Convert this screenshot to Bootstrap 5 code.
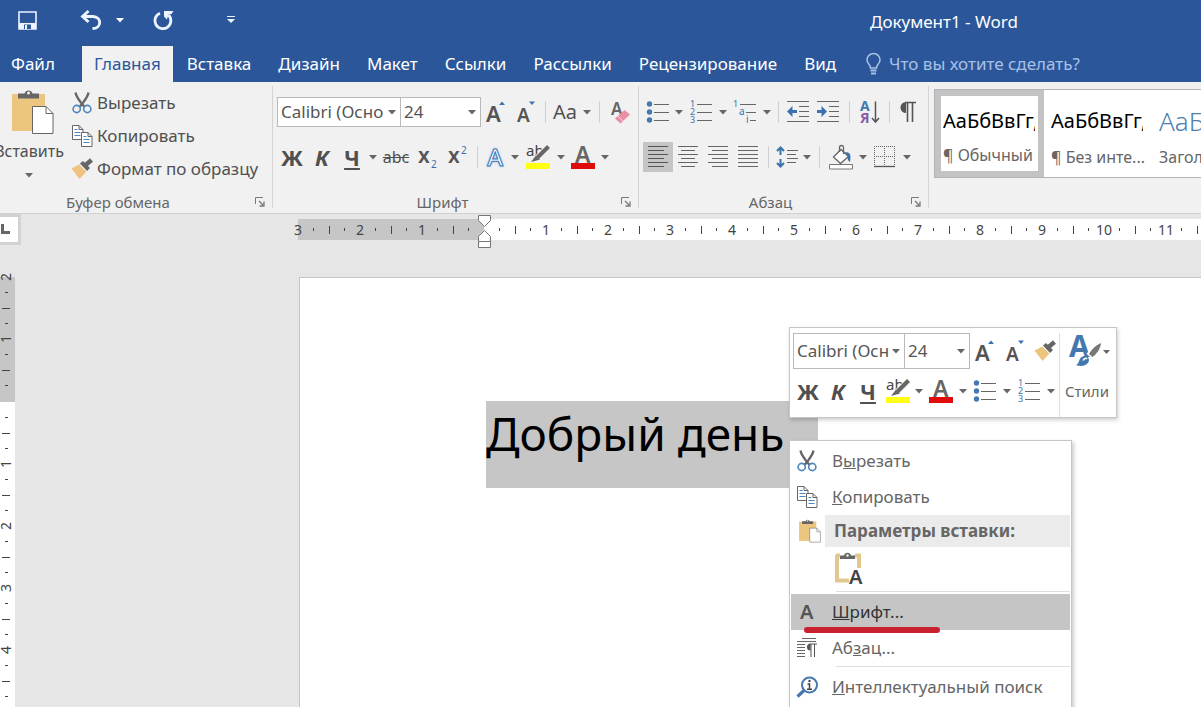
<!DOCTYPE html>
<html lang="ru">
<head>
<meta charset="utf-8">
<meta name="viewport" content="width=device-width, initial-scale=1">
<title>Документ1 - Word</title>
<link href="https://cdn.jsdelivr.net/npm/bootstrap@5.3.0/dist/css/bootstrap.min.css" rel="stylesheet">
<style>
  :root { --word-blue:#2b579a; --ink:#444; --line:#c8c8c8; --ribbon:#f1f1f1; --grey:#c6c6c6; --icon:#666; --accent:#4478ae; }
  body { font-family:"Noto Sans","Open Sans",sans-serif; font-size:16px; line-height:20px; color:var(--ink); background:#e6e6e6; }
  svg { display:block; overflow:visible; }
  symbol { overflow:visible; }
  svg text { font-family:"Noto Sans",sans-serif; }
  .app-head { background:var(--word-blue); color:#fff; }
  .title-row { height:46px; }
  .quick-bar { flex:0 0 870px; height:40px; padding-left:17px; display:grid; grid-template-columns:20px 65px 36px 14px 22px 46px 22px; align-items:center; }
  .doc-title { font-size:17px; line-height:24px; padding-top:10px; }
  .tool { display:flex; align-items:center; justify-content:center; padding:0; border:0; border-radius:0; color:#505050; background:transparent; line-height:24px; min-width:0; height:30px; overflow:visible; }
  .tool:hover { background:#d5d5d5; }
  .quick-bar .tool:hover { background:#3e6db5; }
  .tabs { height:36px; font-size:17px; line-height:24px; }
  .tabs a { color:#fff; padding:6px 13px; text-decoration:none; white-space:nowrap; margin-right:1px; }
  .tabs a.file-tab { padding-left:11px; margin-right:14px; }
  .tabs a.current { background:var(--ribbon); color:var(--word-blue); padding:6px 12px; }
  .tabs .tell-me { color:#a9c0e6; margin-left:16px; white-space:nowrap; }
  .ribbon { background:var(--ribbon); height:132px; border-bottom:1px solid #d2d2d2; }
  .ribbon-group { border-right:1px solid #d4d4d4; margin:4px 0 5px; padding:11px 3px 0 4px; flex:none; }
  .group-clip { width:273px; padding:0 3px 0 0; }
  .group-font { width:366px; }
  .group-par { width:290px; }
  .group-name { font-size:15px; line-height:18px; color:#666; text-align:center; margin-top:21px; display:flex; align-items:center; }
  .group-name span { flex:1; padding-right:10px; }
  .group-clip .group-name { margin-top:8px; }
  .group-clip .group-name span { padding:0 16px 0 0; }
  .group-name .tool { width:16px; height:16px; margin-right:1px; }
  .icon-row { display:grid; align-items:center; height:30px; }
  .icon-row + .icon-row { margin-top:15px; }
  .font-top { grid-template-columns:124px 80px 30px 30px 8px 32px 12px 12px 32px; }
  .font-low { grid-template-columns:30px 30px 30px 12px 34px 30px 30px 8px 28px 12px 34px 12px 32px 12px; }
  .par-top { grid-template-columns:30px 12px 32px 12px 32px 12px 10px 30px 30px 12px 30px 8px 30px; }
  .par-low { grid-template-columns:30px 30px 30px 30px 10px 28px 12px 12px 32px 12px 32px 12px; }
  .rule { width:1px; height:22px; background:#d0d0d0; justify-self:center; }
  .combo { height:30px; border:1px solid #b9b9b9; border-radius:0; padding:0 12px 0 3px; font-size:17px; line-height:24px; color:#555; background:#fff url("data:image/svg+xml,%3Csvg xmlns='http://www.w3.org/2000/svg' width='8' height='5'%3E%3Cpath d='M0 0h8L4 4.5z' fill='%23666'/%3E%3C/svg%3E") no-repeat right 4px center; background-size:8px 5px; }
  .combo + .combo { margin-left:-1px; width:81px; }
  .glyph { font-weight:700; font-size:22px; }
  .outlined { font-size:24px; font-weight:500; color:#fff; -webkit-text-stroke:1px #3a78ba; text-shadow:0 0 3px #7db4ea, 0 0 2px #a9cdf0; }
  .caret-svg { color:#666; }
  .tool.pressed { background:#c5c5c5; }
  .paste-col { width:71px; padding-top:3px; }
  .paste-col .tool { flex-direction:column; height:92px; width:82px; margin-left:-12px; justify-content:flex-start; font-size:16px; }
  .paste-col .drop { margin-top:10px; }
  .clip-list .tool { height:33px; justify-content:flex-start; gap:4px; font-size:17px; white-space:nowrap; }
  .clip-list svg { width:22px; }
  .gallery { margin:7px 0 0 5px; height:89px; background:#fff; border:1px solid #b0b4ba; border-right:0; overflow:hidden; min-width:0; flex:1; }
  .style-card { display:flex; flex-direction:column; align-items:flex-start; justify-content:flex-start; flex:none; width:108px; height:87px; border:0; background:#fff; padding:11px 1px 0 7px; text-align:left; white-space:nowrap; color:#666; }
  .style-card.chosen { border:6px solid #c3c3c3; padding:5px 0 0 2px; width:109px; }
  .style-card .sample { display:block; font-size:20px; line-height:40px; color:#000; width:92px; overflow:hidden; }
  .style-card .sample.head-one { font-size:26px; color:#4c7fae; font-weight:300; }
  .style-card .style-name { display:block; font-size:16px; line-height:32px; }
  .ruler-row { height:36px; padding-top:5px; }
  .tab-stop { width:21px; height:31px; margin-top:-5px; border:3px solid #d2d2d2; border-left:0; background:#fff; padding:0; }
  .ruler-x { height:21px; margin-left:277px; font-size:14px; line-height:21px; min-width:0; }
  .ruler-x .before { width:186px; background:var(--grey); flex:none; }
  .ruler-x .after { background:#fff; min-width:0; overflow:hidden; }
  .ticks { display:flex; }
  .ruler-x .ticks { margin-left:-8px; }
  .cm { display:grid; flex:none; grid-template-columns:16px 15px 16px 15px; width:62px; height:21px; place-items:center; }
  .cm i { display:block; width:1px; height:3px; background:#444; }
  .cm i.half { height:8px; }
  .cm b { font-weight:400; }
  .indent-mark { position:absolute; left:478px; top:1px; }
  .ruler-y { width:15px; flex:none; font-size:14px; line-height:15px; margin-top:27px; background:#fff; }
  .ruler-y .before { background:var(--grey); height:125px; }
  .ruler-y .ticks { flex-direction:column; margin-top:-8px; }
  .ruler-y .before, .ruler-y .after { display:flow-root; }
  .ruler-y .cm { grid-template-columns:12px; grid-template-rows:16px 15px 16px 15px; width:12px; height:62px; }
  .ruler-y .cm b { writing-mode:vertical-rl; transform:rotate(180deg); line-height:12px; }
  .ruler-y .cm i { height:1px; width:3px; }
  .ruler-y .cm i.half { width:8px; }
  .sheet { margin:27px 0 0 284px; background:#fff; border:1px solid #c6c6c6; border-right:0; border-bottom:0; position:relative; padding:123px 0 0 186px; min-width:0; }
  .selected-text { background:var(--grey); color:#000; font-size:46px; line-height:64px; height:87px; width:332px; margin:0; white-space:nowrap; }
  .mini-bar { position:absolute; left:489px; top:49px; width:328px; height:91px; background:#fff; border:1px solid #c6c6c6; box-shadow:1px 2px 4px rgba(0,0,0,.2); padding:5px 0 0 3px; }
  .mini-main { width:267px; border-right:1px solid #dedede; }
  .mini-bar .combo { height:36px; }
  .mini-bar .combo + .combo { width:66px; }
  .mini-top { display:grid; grid-template-columns:112px 65px 30px 30px 30px; align-items:center; height:36px; }
  .mini-low { display:grid; grid-template-columns:30px 30px 30px 30px 12px 32px 12px 32px 12px 32px 12px; align-items:center; height:44px; }
  .mini-styles { width:54px; height:80px; flex-direction:column; justify-content:flex-start; font-size:15px; color:#666; gap:12px; }
  .context { position:absolute; left:489px; top:162px; width:283px; height:280px; background:#fff; border:1px solid #c6c6c6; box-shadow:2px 2px 4px rgba(0,0,0,.2); padding:2px 1px; font-size:17px; }
  .context .entry { display:flex; align-items:center; height:36px; padding:0 0 0 5px; color:#666; white-space:nowrap; gap:14px; line-height:24px; }
  .context .entry svg { width:22px; flex:none; }
  .context .entry.hot { background:#c5c5c5; color:#333; position:relative; }
  .context .caption { height:32px; display:flex; font-weight:700; color:#666; }
  .context .caption span { background:#ebebeb; flex:1; padding:4px 0 0 9px; line-height:24px; }
  .context .caption svg { margin:4px 4px 0 8px; width:22px; }
  .context .text-only { height:36px; margin:4px 0 4px 44px; }
  .context .divide { height:1px; background:#dedede; margin:0 0 2px 45px; }
  .red-mark { position:absolute; left:13px; top:33px; width:136px; height:6px; border-radius:3px; background:#cb2030; z-index:2; }
</style>
</head>
<body class="vh-100 d-flex flex-column overflow-hidden">

<svg class="d-none" aria-hidden="true">
  <symbol id="caret" viewBox="0 0 8 5"><path d="M0 0h8L4 4.5z" fill="currentColor"/></symbol>
  <symbol id="launch" viewBox="0 0 10 10"><path d="M.5 7V.5H8" fill="none" stroke="#777"/><path d="M4 4l4 4M9 4.500V9H4.500" fill="none" stroke="#777" stroke-width="1.300"/></symbol>
  <symbol id="cut" viewBox="0 0 22 22">
    <path d="M4.500 0.500C5 4 8 8 9.500 10L13.500 15M17.500 0.500C17 4 14 8 12.500 10L8.500 15" fill="none" stroke="#666" stroke-width="2.300"/>
    <circle cx="5.700" cy="17" r="3.600" fill="none" stroke="#4f86bd" stroke-width="1.600"/><circle cx="16.300" cy="17" r="3.600" fill="none" stroke="#4f86bd" stroke-width="1.600"/>
  </symbol>
  <symbol id="copy" viewBox="0 0 22 22">
    <path d="M1.500 .5H8l4 4V14.500H1.500zM8 .5V4.500H12" fill="#fff" stroke="#666"/><path d="M3.500 4.500h3M3.500 7.500h6M3.500 10.500h6" stroke="#4f86bd"/>
    <path d="M10.500 7.500H17l4 4V21.500H10.500zM17 7.500v4h4" fill="#fff" stroke="#666"/><path d="M12.500 11.500h3M12.500 14.500h6M12.500 17.500h6" stroke="#4f86bd"/>
  </symbol>
  <symbol id="brush" viewBox="0 0 22 22">
    <path d="M.5 10.500L8.500 6.500 15.500 13.500 8.500 21z" fill="#edc37d"/><path d="M9 5.500l3-2.500 7 7-3 3z" fill="#666"/><path d="M14 7.500L20.500 2" stroke="#666" stroke-width="4.500"/><path d="M9.500 7.500l6 6" stroke="#fff" stroke-width=".8"/>
  </symbol>
  <symbol id="paste" viewBox="0 0 42 46">
    <path d="M0 5h33v37H0z" fill="#ecc67e"/><path d="M6 9.500V4.500h6.500A4.200 4.200 0 0 1 20.500 4.500H27v5z" fill="#666"/><circle cx="16.500" cy="4" r="1.500" fill="#f1f1f1"/>
    <path d="M20.500 17.500H34l7 7V44.500H20.500z" fill="#fff" stroke="#666"/><path d="M34 17.500v7h7" fill="none" stroke="#666"/>
  </symbol>
  <symbol id="font-up" viewBox="0 0 24 24"><text x="2" y="22" font-size="22" font-weight="600" fill="#555">A</text><path d="M15 5l3-3.500L21 5z" fill="#3a72ae"/></symbol>
  <symbol id="font-down" viewBox="0 0 24 24"><text x="3" y="22" font-size="19" font-weight="600" fill="#555">A</text><path d="M15 1.500h6L18 5z" fill="#3a72ae"/></symbol>
  <symbol id="marker" viewBox="0 0 26 28">
    <text x="1" y="13" font-size="15" fill="#444">ab</text><path d="M24 3.500L12.500 14.500" stroke="#f1f1f1" stroke-width="6"/><path d="M23.500 3.500L12.500 14.500" stroke="#666" stroke-width="4"/><path d="M11 12.500l4 4L6 19z" fill="#666"/><path d="M1 20h24v6H1z" fill="#ff1"/>
  </symbol>
  <symbol id="color-a" viewBox="0 0 26 28"><text x="5" y="20" font-size="23" font-weight="600" fill="#666">A</text><path d="M1 20h24v6H1z" fill="#e10b0b"/></symbol>
  <symbol id="bullets" viewBox="0 0 24 22">
    <g fill="#4478ae"><circle cx="3.500" cy="3" r="2.700"/><circle cx="3.500" cy="11" r="2.700"/><circle cx="3.500" cy="19" r="2.700"/></g><path d="M8 3.500h15M8 11.500h15M8 19.500h15" stroke="#666"/>
  </symbol>
  <symbol id="numbers" viewBox="0 0 24 22">
    <g fill="#3a72ae" font-size="9"><text x="1" y="6">1</text><text x="1" y="14">2</text><text x="1" y="22">3</text></g><path d="M8 3.500h15M8 11.500h15M8 19.500h15" stroke="#666"/>
  </symbol>
</svg>

<header class="app-head flex-shrink-0">
  <div class="title-row d-flex">
    <div class="quick-bar">
      <button class="btn tool" aria-label="Сохранить"><svg width="19" height="19" viewBox="0 0 19 19"><path d="M1 1h17v17H1z" fill="none" stroke="#eef4ff" stroke-width="1.600"/><path d="M1 12h17v6H1z" fill="#eef4ff"/><path d="M6 13.500h7V18H6z" fill="#2b579a"/><path d="M7 14h2v4H7z" fill="#eef4ff"/></svg></button>
      <button class="btn tool justify-content-end" aria-label="Отменить"><svg width="22" height="20" viewBox="0 0 22 20"><path d="M3 6.500H13C22 7 22 18.500 12.500 18.500" fill="none" stroke="#eef4ff" stroke-width="2.800"/><path d="M8.500 1L2.500 6.500 8.500 12" fill="none" stroke="#eef4ff" stroke-width="2.800"/></svg></button>
      <button class="btn tool text-white" aria-label="Список отмены"><svg width="8" height="5"><use href="#caret"/></svg></button><span></span>
      <button class="btn tool justify-content-center" aria-label="Повторить"><svg width="21" height="21" viewBox="0 0 21 21"><path d="M7 3.200A8 8 0 1 0 15.500 5" fill="none" stroke="#eef4ff" stroke-width="2.800"/><path d="M11 1h9.500l-2 3-3 .5-1.500 5-3-3z" fill="#eef4ff"/></svg></button>
      <span></span>
      <button class="btn tool text-white" aria-label="Настройка панели"><svg width="8" height="8" viewBox="0 0 8 8"><path d="M0 .5h8" stroke="#eef4ff"/><path d="M0 3h8L4 7z" fill="#eef4ff"/></svg></button>
    </div>
    <div class="doc-title text-nowrap">Документ1 - Word</div>
  </div>
  <nav class="tabs d-flex align-items-stretch">
    <a class="file-tab" href="#">Файл</a><a class="current" href="#">Главная</a><a href="#">Вставка</a><a href="#">Дизайн</a><a href="#">Макет</a><a href="#">Ссылки</a><a href="#">Рассылки</a><a href="#">Рецензирование</a><a href="#">Вид</a>
    <span class="tell-me d-flex align-items-center gap-2"><svg width="15" height="22" viewBox="0 0 15 22"><path d="M4.500 15C4.500 11 1 11 1 7A6.500 6.500 0 0 1 14 7C14 11 10.500 11 10.500 15z" fill="none" stroke="#a9c0e6" stroke-width="1.500"/><path d="M4.500 17.500h6M5 20.500h5" stroke="#a9c0e6" stroke-width="1.800"/></svg>Что вы хотите сделать?</span>
  </nav>
</header>

<section class="ribbon d-flex flex-shrink-0" aria-label="Лента">
  <div class="ribbon-group group-clip">
    <div class="d-flex">
      <div class="paste-col"><button class="btn tool"><svg class="ms-2" width="42" height="46"><use href="#paste"/></svg><span class="mt-1">Вставить</span><svg class="drop caret-svg" width="8" height="5"><use href="#caret"/></svg></button></div>
      <div class="clip-list">
        <button class="btn tool"><svg height="22"><use href="#cut"/></svg>Вырезать</button>
        <button class="btn tool"><svg height="22"><use href="#copy"/></svg>Копировать</button>
        <button class="btn tool"><svg height="22"><use href="#brush"/></svg>Формат по образцу</button>
      </div>
    </div>
    <div class="group-name"><span>Буфер обмена</span><button class="btn tool" aria-label="Параметры буфера обмена"><svg width="10" height="10"><use href="#launch"/></svg></button></div>
  </div>

  <div class="ribbon-group group-font">
    <div class="icon-row font-top">
      <select class="form-select combo" aria-label="Шрифт"><option>Calibri (Осно</option></select>
      <select class="form-select combo" aria-label="Размер шрифта"><option>24</option></select>
      <button class="btn tool" aria-label="Увеличить размер"><svg width="24" height="24"><use href="#font-up"/></svg></button>
      <button class="btn tool" aria-label="Уменьшить размер"><svg width="24" height="24"><use href="#font-down"/></svg></button>
      <span class="rule"></span>
      <button class="btn tool fs-5">Aa</button>
      <button class="btn tool" aria-label="Варианты регистра"><svg class="caret-svg" width="8" height="5"><use href="#caret"/></svg></button>
      <span class="rule"></span>
      <button class="btn tool" aria-label="Удалить форматирование"><svg width="22" height="24" viewBox="0 0 22 24"><text x="1" y="15" font-size="17" font-weight="600" fill="#666">A</text><path d="M5 18.500l9.500-8.500 5.500 4.500-9.500 9z" fill="#e88fa6"/><path d="M8 16l5 5" stroke="#f6d3dc"/></svg></button>
    </div>
    <div class="icon-row font-low">
      <button class="btn tool glyph">Ж</button>
      <button class="btn tool glyph fst-italic">К</button>
      <button class="btn tool glyph text-decoration-underline">Ч</button>
      <button class="btn tool" aria-label="Виды подчёркивания"><svg class="caret-svg" width="8" height="5"><use href="#caret"/></svg></button>
      <button class="btn tool text-decoration-line-through">abc</button>
      <button class="btn tool" aria-label="Подстрочный знак"><svg width="22" height="24" viewBox="0 0 22 24"><text x="1" y="18" font-size="21" font-weight="600" fill="#555">x</text><text x="14" y="23" font-size="10" fill="#3a72ae">2</text></svg></button>
      <button class="btn tool" aria-label="Надстрочный знак"><svg width="22" height="24" viewBox="0 0 22 24"><text x="1" y="18" font-size="21" font-weight="600" fill="#555">x</text><text x="14" y="9" font-size="10" fill="#3a72ae">2</text></svg></button>
      <span class="rule"></span>
      <button class="btn tool outlined" title="Текстовые эффекты">A</button>
      <button class="btn tool" aria-label="Список эффектов"><svg class="caret-svg" width="8" height="5"><use href="#caret"/></svg></button>
      <button class="btn tool" aria-label="Цвет выделения"><svg width="26" height="28"><use href="#marker"/></svg></button>
      <button class="btn tool" aria-label="Цвета выделения"><svg class="caret-svg" width="8" height="5"><use href="#caret"/></svg></button>
      <button class="btn tool" aria-label="Цвет текста"><svg width="26" height="28"><use href="#color-a"/></svg></button>
      <button class="btn tool" aria-label="Цвета текста"><svg class="caret-svg" width="8" height="5"><use href="#caret"/></svg></button>
    </div>
    <div class="group-name"><span>Шрифт</span><button class="btn tool" aria-label="Параметры шрифта"><svg width="10" height="10"><use href="#launch"/></svg></button></div>
  </div>

  <div class="ribbon-group group-par">
    <div class="icon-row par-top">
      <button class="btn tool" aria-label="Маркеры"><svg width="24" height="22"><use href="#bullets"/></svg></button>
      <button class="btn tool" aria-label="Виды маркеров"><svg class="caret-svg" width="8" height="5"><use href="#caret"/></svg></button>
      <button class="btn tool" aria-label="Нумерация"><svg width="24" height="22"><use href="#numbers"/></svg></button>
      <button class="btn tool" aria-label="Виды нумерации"><svg class="caret-svg" width="8" height="5"><use href="#caret"/></svg></button>
      <button class="btn tool" aria-label="Многоуровневый список"><svg width="24" height="22" viewBox="0 0 24 22"><g fill="#3a72ae" font-size="10"><text x="0" y="6" font-size="9">1</text><text x="6" y="14">a</text><text x="13" y="22">i</text></g><path d="M7 3.500h16M13 11.500h10M17 19.500h6" stroke="#666"/></svg></button>
      <button class="btn tool" aria-label="Виды списков"><svg class="caret-svg" width="8" height="5"><use href="#caret"/></svg></button>
      <span class="rule"></span>
      <button class="btn tool" aria-label="Уменьшить отступ"><svg width="22" height="22" viewBox="0 0 22 22"><path d="M0 .5h22M12 5.500h10M12 10.500h10M12 15.500h10M0 20.500h22" stroke="#666"/><path d="M0 10.500L5.500 5v4H10v3H5.500v4z" fill="#3a72ae"/></svg></button>
      <button class="btn tool" aria-label="Увеличить отступ"><svg width="22" height="22" viewBox="0 0 22 22"><path d="M0 .5h22M12 5.500h10M12 10.500h10M12 15.500h10M0 20.500h22" stroke="#666"/><path d="M10 10.500L4.500 5v4H0v3h4.500v4z" fill="#3a72ae"/></svg></button>
      <span class="rule"></span>
      <button class="btn tool" aria-label="Сортировка"><svg width="20" height="24" viewBox="0 0 20 24"><text x="0" y="11" font-size="14" font-weight="700" fill="#4478ae">А</text><text x="0" y="23" font-size="14" font-weight="700" fill="#8a5aa5">Я</text><path d="M15.500 1.500v20M12 18l3.500 4 3.500-4" fill="none" stroke="#555" stroke-width="1.500"/></svg></button>
      <span class="rule"></span>
      <button class="btn tool" aria-label="Непечатаемые знаки"><svg width="18" height="22" viewBox="0 0 18 22"><path d="M7 1A5.500 5.500 0 0 0 7 12z" fill="#555"/><path d="M6 1.500h11M8.500 1v20M13.500 1v20" stroke="#555" stroke-width="1.600"/></svg></button>
    </div>
    <div class="icon-row par-low">
      <button class="btn tool pressed" aria-label="По левому краю"><svg width="20" height="22" viewBox="0 0 20 22"><path d="M0 .5h20M0 4.500h16M0 8.500h20M0 12.500h16M0 16.500h20M0 20.500h16" stroke="#555"/></svg></button>
      <button class="btn tool" aria-label="По центру"><svg width="20" height="22" viewBox="0 0 20 22"><path d="M0 .5h20M3 4.500h14M0 8.500h20M3 12.500h14M0 16.500h20M3 20.500h14" stroke="#666"/></svg></button>
      <button class="btn tool" aria-label="По правому краю"><svg width="20" height="22" viewBox="0 0 20 22"><path d="M0 .5h20M4 4.500h16M0 8.500h20M4 12.500h16M0 16.500h20M4 20.500h16" stroke="#666"/></svg></button>
      <button class="btn tool" aria-label="По ширине"><svg width="20" height="22" viewBox="0 0 20 22"><path d="M0 .5h20M0 4.500h20M0 8.500h20M0 12.500h20M0 16.500h20M0 20.500h20" stroke="#666"/></svg></button>
      <span class="rule"></span>
      <button class="btn tool" aria-label="Интервал"><svg width="22" height="22" viewBox="0 0 22 22"><path d="M4.500 2v7M4.500 13v7M1 5l3.500-3.500L8 5M1 17l3.500 3.500L8 17" fill="none" stroke="#3a72ae" stroke-width="2"/><path d="M11 4.500h11M11 8.500h9M11 12.500h11M11 16.500h9" stroke="#666"/></svg></button>
      <button class="btn tool" aria-label="Виды интервалов"><svg class="caret-svg" width="8" height="5"><use href="#caret"/></svg></button>
      <span class="rule"></span>
      <button class="btn tool" aria-label="Заливка"><svg width="24" height="24" viewBox="0 0 24 24"><path d="M4.500 12L12 4.500 19.500 11.500 11.500 18.500z" fill="#fff" stroke="#666" stroke-width="1.300"/><path d="M10.500 7V2.500a2 2 0 0 1 4 0V9" fill="none" stroke="#666" stroke-width="1.300"/><path d="M16 7c6 0 6 4 5 10-2-1-3-3-2-6z" fill="#3a72ae"/><path d="M.5 19.500h23v4.500H.5z" fill="#fff" stroke="#777"/></svg></button>
      <button class="btn tool" aria-label="Цвета заливки"><svg class="caret-svg" width="8" height="5"><use href="#caret"/></svg></button>
      <button class="btn tool" aria-label="Границы"><svg width="22" height="22" viewBox="0 0 22 22"><path d="M.5 0v21M10.500 0v21M20.500 0v21M0 .5h21M0 10.500h21" stroke="#666" stroke-dasharray="1 1"/><path d="M0 20.500h21" stroke="#555" stroke-width="1.300"/></svg></button>
      <button class="btn tool" aria-label="Виды границ"><svg class="caret-svg" width="8" height="5"><use href="#caret"/></svg></button>
    </div>
    <div class="group-name"><span>Абзац</span><button class="btn tool" aria-label="Параметры абзаца"><svg width="10" height="10"><use href="#launch"/></svg></button></div>
  </div>

  <div class="gallery d-flex">
    <button class="style-card chosen"><span class="sample">АаБбВвГг,</span><span class="style-name">¶ Обычный</span></button>
    <button class="style-card"><span class="sample">АаБбВвГг,</span><span class="style-name">¶ Без инте...</span></button>
    <button class="style-card"><span class="sample head-one">АаБ</span><span class="style-name">Загол</span></button>
  </div>
</section>

<div class="ruler-row d-flex position-relative flex-shrink-0">
  <button class="tab-stop flex-shrink-0" aria-label="Тип табуляции"><svg width="12" height="11" viewBox="0 0 12 11"><path d="M2.500 0v8.500H10" fill="none" stroke="#666" stroke-width="3"/></svg></button>
  <div class="ruler-x d-flex flex-grow-1">
    <div class="before"><div class="ticks" data-labels="3,2,1"></div></div>
    <div class="after flex-grow-1"><div class="ticks" data-labels=",1,2,3,4,5,6,7,8,9,10,11"></div></div>
  </div>
  <svg class="indent-mark" width="13" height="33" viewBox="0 0 13 33"><path d="M.5 .5h12v5l-6 6-6-6zM.5 26.500v-5l6-6 6 6v5zM.5 26.500h12v6H.5z" fill="#fff" stroke="#777"/></svg>
</div>

<main class="d-flex flex-grow-1 overflow-hidden">
  <div class="ruler-y">
    <div class="before"><div class="ticks" data-labels="2,1"></div></div>
    <div class="after"><div class="ticks" data-labels=",1,2,3,4"></div></div>
  </div>
  <article class="sheet flex-grow-1">
    <p class="selected-text">Добрый день</p>

    <div class="mini-bar d-flex" role="toolbar" aria-label="Мини-панель">
      <div class="mini-main">
        <div class="mini-top">
          <select class="form-select combo" aria-label="Шрифт текста"><option>Calibri (Осн</option></select>
          <select class="form-select combo" aria-label="Размер текста"><option>24</option></select>
          <button class="btn tool" aria-label="Крупнее"><svg width="24" height="24"><use href="#font-up"/></svg></button>
          <button class="btn tool" aria-label="Мельче"><svg width="24" height="24"><use href="#font-down"/></svg></button>
          <button class="btn tool" aria-label="Формат по образцу"><svg width="22" height="22"><use href="#brush"/></svg></button>
        </div>
        <div class="mini-low">
          <button class="btn tool glyph">Ж</button>
          <button class="btn tool glyph fst-italic">К</button>
          <button class="btn tool glyph text-decoration-underline">Ч</button>
          <button class="btn tool" aria-label="Выделение"><svg width="26" height="28"><use href="#marker"/></svg></button>
          <button class="btn tool" aria-label="Выбор выделения"><svg class="caret-svg" width="8" height="5"><use href="#caret"/></svg></button>
          <button class="btn tool" aria-label="Цвет"><svg width="26" height="28"><use href="#color-a"/></svg></button>
          <button class="btn tool" aria-label="Выбор цвета"><svg class="caret-svg" width="8" height="5"><use href="#caret"/></svg></button>
          <button class="btn tool" aria-label="Маркеры"><svg width="24" height="22"><use href="#bullets"/></svg></button>
          <button class="btn tool" aria-label="Выбор маркеров"><svg class="caret-svg" width="8" height="5"><use href="#caret"/></svg></button>
          <button class="btn tool" aria-label="Нумерация"><svg width="24" height="22"><use href="#numbers"/></svg></button>
          <button class="btn tool" aria-label="Выбор нумерации"><svg class="caret-svg" width="8" height="5"><use href="#caret"/></svg></button>
        </div>
      </div>
      <button class="btn tool mini-styles"><svg width="44" height="34" viewBox="0 0 44 34"><text x="4" y="24" font-size="30" font-weight="700" fill="#4478ae">A</text><path d="M35 11L24 23" stroke="#fff" stroke-width="7"/><path d="M36 10c-5 2-10 7-12 11l3.500 3c4-3 8-8 8.500-14z" fill="#777"/><path d="M11 32c4-1 2-8 8-9 4-.5 6 3 4.500 6-2 4-8 5-12.500 3z" fill="#4478ae"/><path d="M18 27.500c1-2 3-3 4-1.500" fill="none" stroke="#fff" stroke-width="1.500"/><path d="M38 17h7l-3.500 4z" fill="#666"/></svg>Стили</button>
    </div>

    <div class="context" role="menu">
      <a class="dropdown-item entry" href="#"><svg height="22"><use href="#cut"/></svg><span>В<u>ы</u>резать</span></a>
      <a class="dropdown-item entry" href="#"><svg height="22"><use href="#copy"/></svg><span><u>К</u>опировать</span></a>
      <div class="caption"><svg height="24"><use href="#paste"/></svg><span>Параметры вставки:</span></div>
      <button class="btn tool text-only" aria-label="Сохранить только текст"><svg width="28" height="34" viewBox="0 0 28 34"><path d="M1 3.500h4M20 3.500h4V16M2 3v25.500h12" fill="none" stroke="#e3c88d" stroke-width="4"/><path d="M5 7V3.500h4a3.600 3.600 0 0 1 7 0h4V7z" fill="#666"/><circle cx="12.500" cy="3.500" r="1.200" fill="#fff"/><text x="14" y="32" font-size="20" font-weight="600" fill="#444">A</text></svg></button>
      <div class="divide"></div>
      <a class="dropdown-item entry hot" href="#"><svg height="22" viewBox="0 0 22 22"><text x="4" y="18" font-size="20" font-weight="600" fill="#555">A</text></svg><span><u>Ш</u>рифт...</span><span class="red-mark"></span></a>
      <a class="dropdown-item entry" href="#"><svg height="22" viewBox="0 0 22 22"><path d="M6 1.500h14M1 4.500h19M1 7.500h8M1 10.500h8M1 13.500h8M1 16.500h8M1 19.500h8" stroke="#666"/><path d="M14.500 6.500a3.500 3.500 0 0 0 0 7z" fill="#555"/><path d="M14 7h7M15 7v13M18.500 7v13" stroke="#555"/></svg><span>Аб<u>з</u>ац...</span></a>
      <div class="divide"></div>
      <a class="dropdown-item entry" href="#"><svg height="22" viewBox="0 0 22 22"><circle cx="13.500" cy="9" r="7.500" fill="none" stroke="#4478ae" stroke-width="2"/><path d="M8 14.500l-6.500 6" stroke="#4478ae" stroke-width="3.200"/><circle cx="13.500" cy="5" r="1.200" fill="#444"/><path d="M11.500 8h2v5M11 13.300h5" fill="none" stroke="#444" stroke-width="1.500"/></svg><span><u>И</u>нтеллектуальный поиск</span></a>
    </div>
  </article>
</main>

<script>
  // Each centimetre of a ruler holds its number, a quarter dot, a half tick and a quarter dot.
  document.querySelectorAll('.ticks').forEach(function (row) {
    row.innerHTML = row.dataset.labels.split(',').map(function (n) {
      return '<div class="cm"><b>' + n + '</b><i></i><i class="half"></i><i></i></div>';
    }).join('');
  });
</script>
<script src="https://cdn.jsdelivr.net/npm/bootstrap@5.3.0/dist/js/bootstrap.bundle.min.js"></script>
</body>
</html>
